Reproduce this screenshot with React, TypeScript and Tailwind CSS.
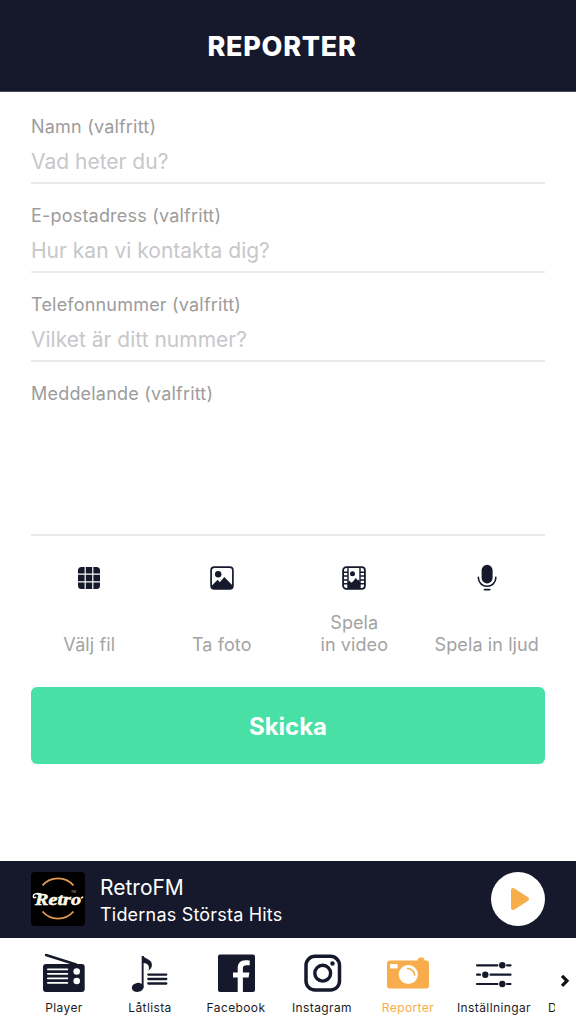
import type { ReactNode } from 'react'

const NAVY = '#15192b'
const ORANGE = '#f7ad4c'

interface Field {
  label: string
  placeholder: string
}

const FIELDS: Field[] = [
  { label: 'Namn (valfritt)', placeholder: 'Vad heter du?' },
  { label: 'E-postadress (valfritt)', placeholder: 'Hur kan vi kontakta dig?' },
  { label: 'Telefonnummer (valfritt)', placeholder: 'Vilket är ditt nummer?' },
]

function GridIcon() {
  return (
    <svg width="24" height="24" viewBox="0 0 24 24" fill={NAVY}>
      <path d="M4.5 1H7.6V7.6H1V4.5A3.5 3.5 0 0 1 4.5 1ZM8.8 1h6.4v6.6H8.8ZM16.4 1h3.1A3.5 3.5 0 0 1 23 4.5v3.1h-6.6ZM1 8.8h6.6v6.4H1ZM8.8 8.8h6.4v6.4H8.8ZM16.4 8.8H23v6.4h-6.6ZM1 16.4h6.6V23H4.5A3.5 3.5 0 0 1 1 19.5ZM8.8 16.4h6.4V23H8.8ZM16.4 16.4H23v3.1a3.5 3.5 0 0 1-3.5 3.5h-3.1Z" />
    </svg>
  )
}

function PhotoIcon() {
  return (
    <svg width="24" height="24" viewBox="0 0 24 24" fill={NAVY}>
      <rect x="1.1" y="1.1" width="21.8" height="21.8" rx="3.2" fill="none" stroke={NAVY} strokeWidth="1.7" />
      <circle cx="8.2" cy="8.2" r="3.2" />
      <path d="M1.5 20 7.6 13.8 9.8 16.2 14.3 11 22.5 19.5V22L21 23H3Z" />
    </svg>
  )
}

function VideoIcon() {
  return (
    <svg width="24" height="24" viewBox="0 0 24 24" fill={NAVY}>
      <rect x="1.1" y="1.1" width="21.8" height="21.8" rx="3.2" fill="none" stroke={NAVY} strokeWidth="1.8" />
      <path d="M6 1v22M18 1v22M1 6.3h5M1 10h5M1 14h5M1 17.8h5M18 6.3h5M18 10h5M18 14h5M18 17.8h5" stroke={NAVY} strokeWidth="1.4" />
      <circle cx="10.5" cy="7.7" r="2.5" />
      <path d="M6 16 7.6 14.8 9.2 16.8 11 15.6 14 11.8 15.2 14.2 16.2 13.4 18 16V23H6Z" />
    </svg>
  )
}

function MicIcon() {
  return (
    <svg width="24" height="28" viewBox="0 0 24 28" fill={NAVY}>
      <rect x="6.6" y="0.8" width="11" height="18.6" rx="5.5" />
      <path d="M3.4 13.2v.8a8.7 8.2 0 0 0 17.4 0v-.8M9.4 25.6h5.4" fill="none" stroke={NAVY} strokeWidth="1.6" strokeLinecap="round" />
    </svg>
  )
}

function RadioIcon() {
  return (
    <svg width="44" height="40" viewBox="0 0 44 40">
      <path d="M4 3 34 12.5" stroke={NAVY} strokeWidth="2.4" strokeLinecap="round" />
      <rect x="1" y="12" width="41.7" height="28" rx="3" fill={NAVY} />
      <path d="M5.8 17.3h19.6M5.8 21.8h19.6M5.8 26.3h19.6M5.8 30.8h19.6" stroke="white" strokeWidth="1.7" strokeLinecap="round" />
      <circle cx="34.7" cy="19.5" r="3.3" fill="white" />
      <circle cx="34.7" cy="29" r="3.3" fill="white" />
    </svg>
  )
}

function PlaylistIcon() {
  return (
    <svg width="44" height="40" viewBox="0 0 44 40" fill={NAVY}>
      <ellipse cx="9.7" cy="35.4" rx="5.9" ry="4.5" transform="rotate(-8 9.7 35.4)" />
      <path d="M13.7 4h1.9c.6 2.6 8.3 3.1 8.3 8.7 0 2.3-1 4.1-3.4 6.1 1.5-4.7-.2-7.3-4.9-7.9V35.5H13.7Z" />
      <path d="M20.3 22.6h18M20.3 27h18M20.3 31.5h18" stroke={NAVY} strokeWidth="2.3" strokeLinecap="round" />
    </svg>
  )
}

function FacebookIcon() {
  return (
    <svg width="44" height="40" viewBox="0 0 44 40">
      <rect x="4" y="2.5" width="37" height="37.5" rx="2" fill={NAVY} />
      <path d="M23.7 40V25.4H19v-4.8h4.7v-4.3c0-5.3 3-8 7.6-8 1.8 0 3.5.1 4.4.3v4.7h-3c-2.8 0-3.8 1.1-3.8 3.3v4h6.5l-.8 4.8h-5.7V40Z" fill="white" />
    </svg>
  )
}

function InstagramIcon() {
  return (
    <svg width="44" height="40" viewBox="0 0 44 40">
      <rect x="6" y="4.3" width="33.5" height="33.7" rx="9" fill="none" stroke={NAVY} strokeWidth="3.5" />
      <circle cx="22.7" cy="21.2" r="7.9" fill="none" stroke={NAVY} strokeWidth="3.4" />
      <circle cx="32.5" cy="11.5" r="2.2" fill={NAVY} />
    </svg>
  )
}

function CameraIcon() {
  return (
    <svg width="44" height="40" viewBox="0 0 44 40">
      <path d="M4 8.5H31.5c.4-2 1.3-3 2.5-3h2.2c1.2 0 2.1 1 2.5 3H40a3 3 0 0 1 3 3V33.5a3 3 0 0 1-3 3H4a3 3 0 0 1-3-3V11.5a3 3 0 0 1 3-3Z" fill={ORANGE} />
      <rect x="4" y="12" width="7.7" height="4.6" rx="1" fill="white" />
      <circle cx="22.3" cy="22.5" r="9.6" fill="white" />
      <path d="M21.5 16.5a7 7 0 0 1 7.2 6.5" fill="none" stroke={ORANGE} strokeWidth="1.6" strokeLinecap="round" />
    </svg>
  )
}

function SlidersIcon() {
  return (
    <svg width="44" height="40" viewBox="0 0 44 40">
      <path d="M5 13.3h20.5M35 13.3h3.5M5 22.7h3M18.5 22.7h20M5 32h20.5M35 32h3.5" stroke={NAVY} strokeWidth="2.2" strokeLinecap="round" />
      <circle cx="30.3" cy="13.3" r="3.2" fill={NAVY} />
      <circle cx="13.3" cy="22.7" r="3.2" fill={NAVY} />
      <circle cx="30.3" cy="32" r="3.2" fill={NAVY} />
    </svg>
  )
}

function RetroLogo() {
  return (
    <svg width="54" height="54" viewBox="0 0 54 54" className="rounded">
      <rect width="54" height="54" fill="black" />
      <path d="M11.5 13.5a20.5 20.5 0 0 1 31 0M11.5 39.5a20.5 20.5 0 0 0 31 0" fill="none" stroke="#e0984e" strokeWidth="1.9" />
      <path d="M10 22C5 20.8 2 22 2.3 24.5c.3 1.6 2.2 1.6 2.7.3M50 26l2.2-1" fill="none" stroke="#fdfbe8" strokeWidth="1.4" />
      <text x="4" y="32.5" textLength="46" lengthAdjust="spacingAndGlyphs" fill="#fdfbe8" stroke="#fdfbe8" strokeWidth=".5" className="font-['Liberation_Serif',serif] text-[16px] font-bold italic">Retro</text>
      <text x="40.5" y="20.5" fill="#b9b7aa" className="font-['Inter',sans-serif] text-[3px]">FM</text>
    </svg>
  )
}

interface ActionProps {
  icon: ReactNode
  children: ReactNode
}

function Action({ icon, children }: ActionProps) {
  return (
    <button type="button" className="flex flex-col items-center">
      <span className="flex h-7 items-center">{icon}</span>
      <span className="mt-5 flex h-11 items-end whitespace-nowrap text-center text-[18px] leading-[22px] tracking-[0.1px] text-[#a3a3a3]">
        {children}
      </span>
    </button>
  )
}

interface TabProps {
  icon: ReactNode
  label: string
  active?: boolean
}

function Tab({ icon, label, active }: TabProps) {
  return (
    <a className={`flex w-[86px] shrink-0 flex-col items-center ${active ? 'text-[#f7ad4c]' : 'text-[#1c1c1e]'}`}>
      {icon}
      <span className="mt-2 whitespace-nowrap text-[12px] leading-4 tracking-[0.4px]">{label}</span>
    </a>
  )
}

export default function App() {
  return (
    <div className="flex h-[1024px] w-[576px] flex-col overflow-hidden bg-white font-['Inter',sans-serif]">
      <header className="flex h-[92px] shrink-0 items-center justify-center border-b border-[#484b58] bg-[#15192b] pr-3 pt-[3px]">
        <h1 className="text-[27px] font-extrabold leading-8 tracking-[0.7px] text-white">REPORTER</h1>
      </header>

      <main className="flex flex-1 flex-col pt-[3px]">
        <form className="px-[31px]">
          {FIELDS.map(f => (
            <label key={f.label} className="flex h-[89px] flex-col border-b-2 border-[#ebebeb] pt-[21px]">
              <span className="text-[18px] leading-[22px] tracking-[0.2px] text-[#9c9c9c]">{f.label}</span>
              <input
                type="text"
                placeholder={f.placeholder}
                className="mt-[11px] h-[26px] w-full text-[21px] leading-[26px] outline-none placeholder:text-[#c7c7ca]"
              />
            </label>
          ))}
          <label className="flex h-[174px] flex-col border-b-2 border-[#ebebeb] pt-[21px]">
            <span className="text-[18px] leading-[22px] tracking-[0.2px] text-[#9c9c9c]">Meddelande (valfritt)</span>
            <textarea className="mt-2 flex-1 resize-none outline-none" />
          </label>
        </form>

        <div className="mt-7 grid grid-cols-4 px-[23px]">
          <Action icon={<GridIcon />}>Välj fil</Action>
          <Action icon={<PhotoIcon />}>Ta foto</Action>
          <Action icon={<VideoIcon />}>
            Spela
            <br />
            in video
          </Action>
          <Action icon={<MicIcon />}>Spela in ljud</Action>
        </div>

        <button type="button" className="mx-[31px] mt-[31px] h-[77px] rounded-md bg-[#48e0a4] pt-0.5 text-[24px] font-bold text-white">
          Skicka
        </button>
      </main>

      <section className="flex h-[77px] shrink-0 items-center bg-[#15192b] px-[31px] pb-0.5 text-white">
        <RetroLogo />
        <div className="ml-[15px] flex-1 pt-1">
          <p className="text-[21px] leading-7">RetroFM</p>
          <p className="text-[18px] leading-[26px] tracking-[0.2px]">Tidernas Största Hits</p>
        </div>
        <button type="button" aria-label="Play" className="flex size-[54px] items-center justify-center rounded-full bg-white">
          <svg width="54" height="54" viewBox="0 0 54 54">
            <path d="M22 18 36 27 22 36Z" fill={ORANGE} stroke={ORANGE} strokeWidth="4" strokeLinejoin="round" />
          </svg>
        </button>
      </section>

      <nav className="flex h-[86px] shrink-0 pl-[21px] pt-[14px]">
        <div className="flex w-[534px] overflow-hidden">
          <Tab icon={<RadioIcon />} label="Player" />
          <Tab icon={<PlaylistIcon />} label="Låtlista" />
          <Tab icon={<FacebookIcon />} label="Facebook" />
          <Tab icon={<InstagramIcon />} label="Instagram" />
          <Tab icon={<CameraIcon />} label="Reporter" active />
          <Tab icon={<SlidersIcon />} label="Inställningar" />
          <span className="ml-[11px] mt-12 shrink-0 text-[12px] leading-4 text-[#1c1c1e]">D</span>
        </div>
        <svg width="21" height="58" viewBox="0 0 21 58" fill="none">
          <path d="M7 23.8 12 28.8 7 33.8" stroke="#111" strokeWidth="3.2" />
        </svg>
      </nav>
    </div>
  )
}
